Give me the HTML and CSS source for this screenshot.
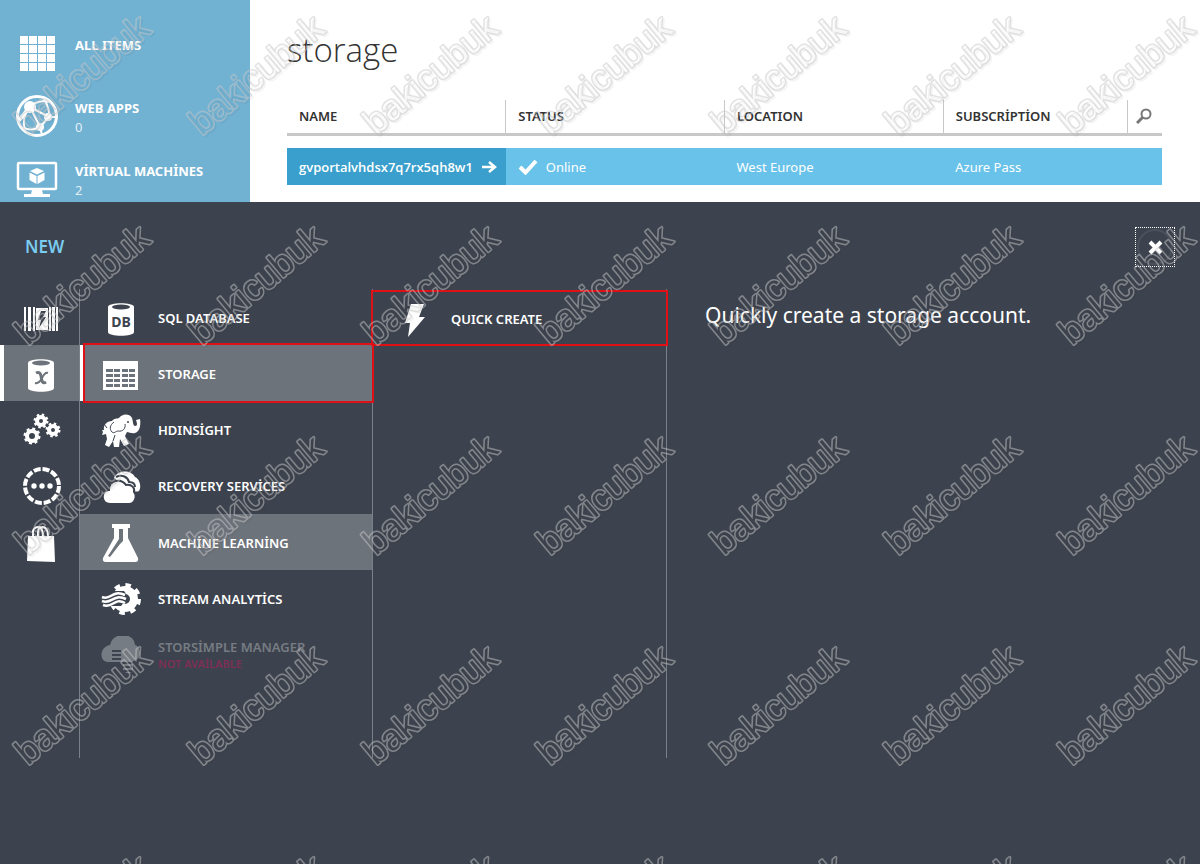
FILE: index.html
```html
<!DOCTYPE html>
<html lang="en">
<head>
    <meta charset="UTF-8">
    <meta name="viewport" content="width=device-width, initial-scale=1.0">
    <title>Storage</title>
    <link rel="stylesheet" href="styles.css">
</head>
<body>
    <div class="top">
        <nav class="sidebar">
            <a href="#" class="side-item">
                <svg class="side-icon" viewBox="0 0 42 42">
                    <path fill="#fff" d="M4 4h8v8H4zM13 4h8v8h-8zM22 4h8v8h-8zM31 4h8v8h-8zM4 13h8v8H4zM13 13h8v8h-8zM22 13h8v8h-8zM31 13h8v8h-8zM4 22h8v8H4zM13 22h8v8h-8zM22 22h8v8h-8zM31 22h8v8h-8zM4 31h8v8H4zM13 31h8v8h-8zM22 31h8v8h-8zM31 31h8v8h-8z"/>
                </svg>
                <span class="side-text"><span class="side-title">ALL ITEMS</span></span>
            </a>
            <a href="#" class="side-item">
                <svg class="side-icon" viewBox="0 0 42 42">
                    <g fill="none" stroke="#fff" stroke-width="2">
                        <circle cx="21" cy="21" r="19.500" stroke-width="3"/>
                        <path d="M14 12L33 22M14 12L24 32M33 22L24 32M14 12Q22 4 33 7M14 12Q5 22 9 35M33 22Q34 14 28 4M24 32Q14 37 7 32M24 32L26 40M33 22L40 22"/>
                        <path d="M12 14Q8 20 3 25" stroke-width="4"/>
                    </g>
                    <g fill="#fff">
                        <circle cx="14" cy="12" r="6"/>
                        <circle cx="32" cy="22" r="4"/>
                        <circle cx="24" cy="32" r="4"/>
                    </g>
                </svg>
                <span class="side-text"><span class="side-title">WEB APPS</span><span class="side-count">0</span></span>
            </a>
            <a href="#" class="side-item">
                <svg class="side-icon" viewBox="0 0 42 42">
                    <rect x="2" y="5" width="38" height="26" rx="1" fill="none" stroke="#fff" stroke-width="2.500"/>
                    <path fill="#fff" d="M16 32h10l1 4h7v3H8v-3h7zM21 10l7 3-7 3.500-7-3.500zM13.500 14.500l7 3.500v8l-7-4zM28.500 14.500v7.500l-7 4v-8z"/>
                </svg>
                <span class="side-text"><span class="side-title">VİRTUAL MACHİNES</span><span class="side-count">2</span></span>
            </a>
        </nav>
        <main class="content">
            <h1>storage</h1>
            <table class="storage-table">
                <colgroup>
                    <col class="col-wide"><col class="col-wide"><col class="col-wide"><col class="col-sub"><col>
                </colgroup>
                <thead>
                    <tr>
                        <th scope="col">NAME</th>
                        <th scope="col">STATUS</th>
                        <th scope="col">LOCATION</th>
                        <th scope="col">SUBSCRİPTİON</th>
                        <th scope="col" class="search-cell">
                            <button type="button" class="search-btn" aria-label="Search">
                                <svg viewBox="0 0 16 16" fill="none" stroke="#777">
                                    <circle cx="10" cy="6" r="4.500" stroke-width="2"/>
                                    <path d="M6.500 9.500L1 15" stroke-width="3"/>
                                </svg>
                            </button>
                        </th>
                    </tr>
                </thead>
                <tbody>
                    <tr class="gap-row"><td colspan="5"></td></tr>
                    <tr class="data-row">
                        <td class="name-cell">
                            <a href="#" class="name-link">gvportalvhdsx7q7rx5qh8w1
                                <svg class="arrow" viewBox="0 0 16 12" fill="none" stroke="#fff" stroke-width="2.500"><path d="M1 6h13M8 1l6 5-6 5"/></svg>
                            </a>
                        </td>
                        <td>
                            <span class="status">
                                <svg class="check" viewBox="0 0 20 16"><path d="M2 8l5.500 5.500L18 2" fill="none" stroke="#fff" stroke-width="4"/></svg>
                                Online
                            </span>
                        </td>
                        <td>West Europe</td>
                        <td colspan="2">Azure Pass</td>
                    </tr>
                </tbody>
            </table>
        </main>
    </div>

    <section class="drawer">
        <header class="drawer-head">
            <h2>NEW</h2>
            <button type="button" class="close-btn" aria-label="Close">
                <svg viewBox="0 0 38 38" fill="none">
                    <circle cx="19" cy="19" r="17" stroke="#4b515c" stroke-width="2"/>
                    <path d="M14 14l11 11M25 14L14 25" stroke="#fff" stroke-width="4"/>
                </svg>
            </button>
        </header>
        <div class="columns">
            <nav class="categories">
                <a href="#" class="category" aria-label="Compute">
                    <svg class="icon" viewBox="0 0 40 40">
                        <path fill="#fff" d="M3 8h2v24H3zM7 8h3v24H7zM12 8h2v24h-2zM28 8h2v24h-2zM31 8h3v24h-3zM35 8h2v24h-2zM15 9h12v22H15z"/>
                        <path fill="#3d434e" d="M20 12h5l-3 6h3l-7 11 2-8h-3z"/>
                    </svg>
                </a>
                <a href="#" class="category active" aria-label="Data services">
                    <svg class="icon" viewBox="0 0 40 40">
                        <path fill="#fff" d="M7 8c0-5 26-5 26 0v25c0 5-26 5-26 0z"/>
                        <ellipse cx="20" cy="8" rx="9" ry="2.500" fill="#6d737b"/>
                        <path fill="none" stroke="#6d737b" stroke-width="3" d="M15 18q4-2 5 3l1 5q1 3 4 1"/>
                        <path fill="none" stroke="#6d737b" stroke-width="2" d="M27 18q-3-1-6 5t-7 5"/>
                    </svg>
                </a>
                <a href="#" class="category" aria-label="App services">
                    <svg class="icon" viewBox="0 0 40 40" fill="none" stroke="#fff">
                        <g stroke-width="4">
                            <circle cx="20" cy="10" r="4"/><circle cx="32" cy="19" r="4"/><circle cx="11" cy="25" r="5"/>
                        </g>
                        <g stroke-width="3">
                            <circle cx="20" cy="10" r="6" stroke-dasharray="2.300 2.412"/>
                            <circle cx="32" cy="19" r="6" stroke-dasharray="2.300 2.412"/>
                            <circle cx="11" cy="25" r="7" stroke-dasharray="2.800 2.698"/>
                        </g>
                    </svg>
                </a>
                <a href="#" class="category" aria-label="Network services">
                    <svg class="icon" viewBox="0 0 40 40">
                        <circle cx="21" cy="19" r="17" fill="none" stroke="#fff" stroke-width="4" stroke-dasharray="7 1.901"/>
                        <g fill="#fff"><circle cx="13" cy="19" r="2.700"/><circle cx="21" cy="19" r="2.700"/><circle cx="29" cy="19" r="2.700"/></g>
                    </svg>
                </a>
                <a href="#" class="category" aria-label="Marketplace">
                    <svg class="icon" viewBox="0 0 40 40">
                        <path fill="#fff" d="M7 13h26l1 26-28-1z"/>
                        <path fill="none" stroke="#fff" stroke-width="2" d="M12 14V8q1-4 6-4 4 1 4 10M17 14V9q0-5 5-5 5 1 5 9"/>
                    </svg>
                </a>
            </nav>
            <nav class="services">
                <a href="#" class="service">
                    <svg class="icon" viewBox="0 0 40 40">
                        <path fill="#fff" d="M7 8c0-5 26-5 26 0v25c0 5-26 5-26 0z"/>
                        <ellipse cx="20" cy="8" rx="9" ry="2.500" fill="#3d434e"/>
                        <text x="20" y="28" class="db-text">DB</text>
                    </svg>
                    <span>SQL DATABASE</span>
                </a>
                <a href="#" class="service active marked">
                    <svg class="icon" viewBox="0 0 40 40">
                        <path fill="#fff" d="M2 6h35v29H2z"/>
                        <path fill="#6d737b" d="M5 14h7v3H5zM13 14h6v3h-6zM21 14h6v3h-6zM28 14h6v3h-6zM5 19h7v3H5zM13 19h6v3h-6zM21 19h6v3h-6zM28 19h6v3h-6zM5 24h7v3H5zM13 24h6v3h-6zM21 24h6v3h-6zM28 24h6v3h-6zM5 29h7v3H5zM13 29h6v3h-6zM21 29h6v3h-6zM28 29h6v3h-6z"/>
                    </svg>
                    <span>STORAGE</span>
                </a>
                <a href="#" class="service">
                    <svg class="icon" viewBox="0 0 40 40">
                        <path fill="#fff" d="M3 19c-1-5 3-9 8-9 2-3 5-2 7-3 3-4 10-5 13 0 1 3 1 8 3 8 3 0 2-3 1-6l4-1c1 5 0 13-5 14-3 1-6-1-8-1l-2 4 4 8-5 2-4-7-1 8H13l-1-6-4 6-4-2 2-6-1-5-4 1 1-3-1-2z"/>
                        <path fill="none" stroke="#3d434e" d="M13 11c-4 3-5 7-2 10 2 2 4-1 6-1 5 1 8-3 7-7M12 30l2-6M3 13l3 4"/>
                        <circle cx="27" cy="11" r="1" fill="#3d434e"/>
                    </svg>
                    <span>HDINSİGHT</span>
                </a>
                <a href="#" class="service">
                    <svg class="icon" viewBox="0 0 40 40">
                        <path fill="#fff" d="M13 11c3-8 17-9 21-1 4 1 7 9 4 14-5 2-10-2-14-5z"/>
                        <path fill="#fff" stroke="#3d434e" stroke-width="2" d="M9 37c-10-1-9-14-1-14C8 13 20 11 25 18c6-1 9 3 8 7 4 5 0 12-5 12z"/>
                        <path fill="none" stroke="#3d434e" stroke-width="2" d="M15 10c6-3 12 0 13 5 4 0 6 2 6 5"/>
                    </svg>
                    <span>RECOVERY SERVİCES</span>
                </a>
                <a href="#" class="service hover">
                    <svg class="icon" viewBox="0 0 40 40">
                        <path fill="#fff" d="M11 0h18v4h-2v10l10 20q1 4-3 4H5q-4 0-3-4l11-20V4h-2z"/>
                        <path fill="#6d737b" d="M18 5h4v12l-3 3-10 13-2-1 11-17z"/>
                    </svg>
                    <span>MACHİNE LEARNİNG</span>
                </a>
                <a href="#" class="service">
                    <svg class="icon" viewBox="0 0 40 40" fill="none">
                        <circle cx="24" cy="19" r="9" stroke="#fff" stroke-width="8"/>
                        <circle cx="24" cy="19" r="14" stroke="#fff" stroke-width="4" stroke-dasharray="5.500 5.496"/>
                        <path fill="#3d434e" d="M0 13l12-2h11q4 4 1 10l-4 5H0z"/>
                        <path stroke="#fff" stroke-width="2.500" d="M1 17c9 4 10-8 23-2M1 21c10 4 11-8 24-2M2 25c10 4 11-8 22-2"/>
                    </svg>
                    <span>STREAM ANALYTİCS</span>
                </a>
                <a href="#" class="service disabled" aria-disabled="true">
                    <svg class="icon" viewBox="0 0 40 40">
                        <path fill="#767c83" d="M7 26c-9 0-9-15 2-17C12-5 33-4 34 9c6 1 8 15-2 16v9q-3 6-10 1v-9z"/>
                        <path stroke="#3d434e" stroke-width="2" d="M11 15h9M11 19h9M11 23h9M20 27h12M22 31h9M22 35h9"/>
                    </svg>
                    <span>STORSİMPLE MANAGER<small>NOT AVAİLABLE</small></span>
                </a>
            </nav>
            <nav class="actions">
                <a href="#" class="service marked">
                    <svg class="icon" viewBox="0 0 40 40"><path fill="#fff" d="M17 4h13l-5 13h6L14 37l2-14h-5z"/></svg>
                    <span>QUICK CREATE</span>
                </a>
            </nav>
            <p class="description">Quickly create a storage account.</p>
        </div>
    </section>

    <!-- repeated watermark over the whole page -->
    <svg class="watermark" aria-hidden="true">
        <defs>
            <mask id="ring" maskUnits="userSpaceOnUse" x="0" y="0" width="174" height="210">
                <text transform="translate(28 136) rotate(-40)" class="mark-outer">bakicubuk</text>
                <text transform="translate(28 136) rotate(-40)" class="mark-inner">bakicubuk</text>
            </mask>
            <pattern id="mark" width="174" height="210" patternUnits="userSpaceOnUse">
                <text transform="translate(30 138) rotate(-40)" class="mark-shadow">bakicubuk</text>
                <rect width="174" height="210" class="mark-color" mask="url(#ring)"/>
            </pattern>
        </defs>
        <rect width="100%" height="100%" fill="url(#mark)"/>
    </svg>
</body>
</html>
```
FILE: styles.css
```css
* {
    box-sizing: border-box;
}

body {
    margin: 0;
    min-height: 100vh;
    display: flex;
    flex-direction: column;
    position: relative;
    background-color: #fff;
    font-family: "Noto Sans", "Open Sans", sans-serif;
    font-size: 13px;
    color: #333;
}

a {
    color: inherit;
    text-decoration: none;
}

button {
    padding: 0;
    border: 0;
    background: none;
    cursor: pointer;
}

svg {
    display: block;
    flex-shrink: 0;
}

.top {
    display: flex;
    height: 202px;
    overflow: hidden;
}

/* Left menu */
.sidebar {
    width: 250px;
    flex-shrink: 0;
    padding: 32px 16px 0;
    background-color: #71b1d2;
    color: #fff;
}

.side-item {
    display: flex;
    gap: 17px;
    height: 63px;
}

.side-icon {
    width: 42px;
    height: 42px;
}

.side-text {
    display: flex;
    flex-direction: column;
    padding-top: 3px;
}

.side-title {
    font-weight: 700;
    line-height: 20px;
}

.side-count {
    line-height: 18px;
    opacity: 0.8;
}

/* Storage list */
.content {
    flex: 1;
    padding: 26px 38px 0 37px;
}

h1 {
    margin: 0 0 26px;
    font-family: "Open Sans", sans-serif;
    font-size: 33px;
    line-height: 48px;
    font-weight: 300;
}

.storage-table {
    width: 100%;
    table-layout: fixed;
    border-collapse: collapse;
}

.col-wide {
    width: 25%;
}

.col-sub {
    width: 21%;
}

th {
    height: 34px;
    padding: 0 12px;
    text-align: left;
    font-weight: 600;
    border-left: 1px solid #c8c8c8;
    border-bottom: 3px solid #c8c8c8;
}

th:first-child {
    border-left: 0;
}

.search-cell {
    padding: 0 8px;
}

.search-btn {
    display: block;
    width: 16px;
    height: 16px;
}

.gap-row td {
    height: 14px;
    padding: 0;
}

.data-row {
    background-color: #69c2e9;
    color: #fff;
}

.data-row td {
    height: 37px;
    padding: 0 12px;
}

.data-row .name-cell {
    padding-right: 9px;
    background-color: #3a9fcc;
    font-family: "Open Sans", sans-serif;
    font-weight: 600;
}

.name-link,
.status {
    display: flex;
    align-items: center;
    justify-content: space-between;
}

.status {
    justify-content: flex-start;
    gap: 8px;
}

.arrow {
    width: 16px;
    height: 12px;
}

.check {
    width: 20px;
    height: 16px;
}

/* New drawer */
.drawer {
    flex: 1;
    background-color: #3d434e;
    color: #fff;
}

.drawer-head {
    display: flex;
    justify-content: space-between;
    height: 87px;
    padding: 25px 25px 0;
}

h2 {
    margin: 0;
    color: #7accf0;
    font-size: 17px;
    line-height: 40px;
    font-weight: 600;
}

.close-btn {
    width: 40px;
    height: 40px;
    border: 1px dotted #fff;
}

.columns {
    display: flex;
    height: 469px;
}

.categories,
.services,
.actions {
    flex-shrink: 0;
    border-right: 1px solid #7a8087;
}

.categories {
    width: 80px;
}

.services {
    width: 293px;
}

.actions {
    width: 294px;
}

.category,
.service {
    display: flex;
    align-items: center;
    height: 56px;
    font-weight: 600;
}

.category {
    padding: 4px 0 0 21px;
}

.service {
    gap: 17px;
    padding: 1px 0 0 21px;
}

.service .icon {
    margin-top: 3px;
}

.icon {
    width: 40px;
    height: 40px;
}

.category.active {
    padding-left: 17px;
    border-left: 4px solid #fff;
    background-color: #6d737b;
}

.service.active,
.service.hover {
    background-color: #6d737b;
}

.service.hover {
    margin-top: 1px;
}

.marked {
    outline: 2px solid #df1016;
}

/* white bar stays to the left of the red frame */
.service.active {
    margin-left: 5px;
    padding-left: 16px;
    box-shadow: -5px 0 0 #fff;
}

.actions .service {
    height: 52px;
    margin-top: 3px;
}

.disabled {
    color: #767c83;
}

.disabled small {
    display: block;
    color: #7d2f55;
    font-size: 11px;
    line-height: 16px;
}

.db-text {
    fill: #3d434e;
    font-size: 14px;
    font-weight: 700;
    text-anchor: middle;
}

.description {
    margin: 0;
    padding: 10px 38px;
    font-size: 21px;
    line-height: 32px;
}

.watermark {
    position: absolute;
    top: 0;
    left: 0;
    width: 100%;
    height: 100%;
    pointer-events: none;
}

/* the mask keeps only a ring around each letter */
.mark-outer,
.mark-inner,
.mark-shadow {
    font-family: "Liberation Sans", Arial, sans-serif;
    font-size: 36px;
    stroke-linejoin: round;
}

.mark-outer {
    fill: #fff;
    stroke: #fff;
    stroke-width: 3;
}

.mark-inner {
    fill: #000;
    stroke: #000;
    stroke-width: 0;
}

.mark-shadow {
    fill: none;
    stroke: rgba(0, 0, 0, 0.04);
    stroke-width: 2;
}

.mark-color {
    fill: rgba(200, 200, 200, 0.5);
}
```
